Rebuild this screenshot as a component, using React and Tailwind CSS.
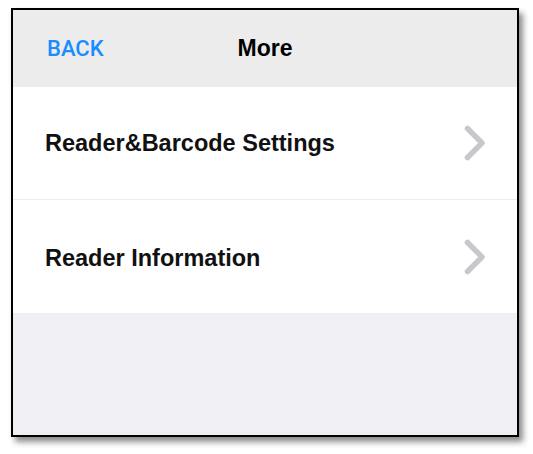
import React from 'react'

const rows = ['Reader&Barcode Settings', 'Reader Information']

function Chevron() {
  return (
    <svg width="24" height="38" viewBox="0 0 24 38" fill="none">
      <path
        d="M4.5 4.5 L19 19 L4.5 33.5"
        stroke="#c7c7cc"
        strokeWidth="5.5"
        strokeLinecap="round"
        strokeLinejoin="round"
      />
    </svg>
  )
}

export default function App() {
  return (
    <div className="w-[533px] h-[454px] bg-white pt-[8px] pl-[11px] font-['Liberation_Sans',Arial,sans-serif]">
      <div className="w-[508px] h-[429px] border-2 border-black shadow-[4px_5px_6px_rgba(0,0,0,0.45)] flex flex-col bg-[#efeff4]">
        {/* Header */}
        <div className="h-[77px] bg-[#ececec] grid grid-cols-[1fr_auto_1fr] items-center px-[34px]">
          <span className="font-['Roboto',sans-serif] text-[22px] font-medium text-[#1a8cff]">BACK</span>
          <span className="text-[23px] font-bold text-black">More</span>
          <span />
        </div>

        {/* Rows */}
        <div className="bg-white">
          {rows.map((label, i) => (
            <div
              key={label}
              className={`flex items-center justify-between pl-[32px] pr-[30px] h-[113px] ${
                i === 0 ? 'border-b border-[#ededed]' : ''
              }`}
            >
              <span className={`text-[23.5px] font-bold text-[#111] ${i === 0 ? 'pt-[2px]' : 'pt-[5px]'}`}>
                {label}
              </span>
              <Chevron />
            </div>
          ))}
        </div>
      </div>
    </div>
  )
}
